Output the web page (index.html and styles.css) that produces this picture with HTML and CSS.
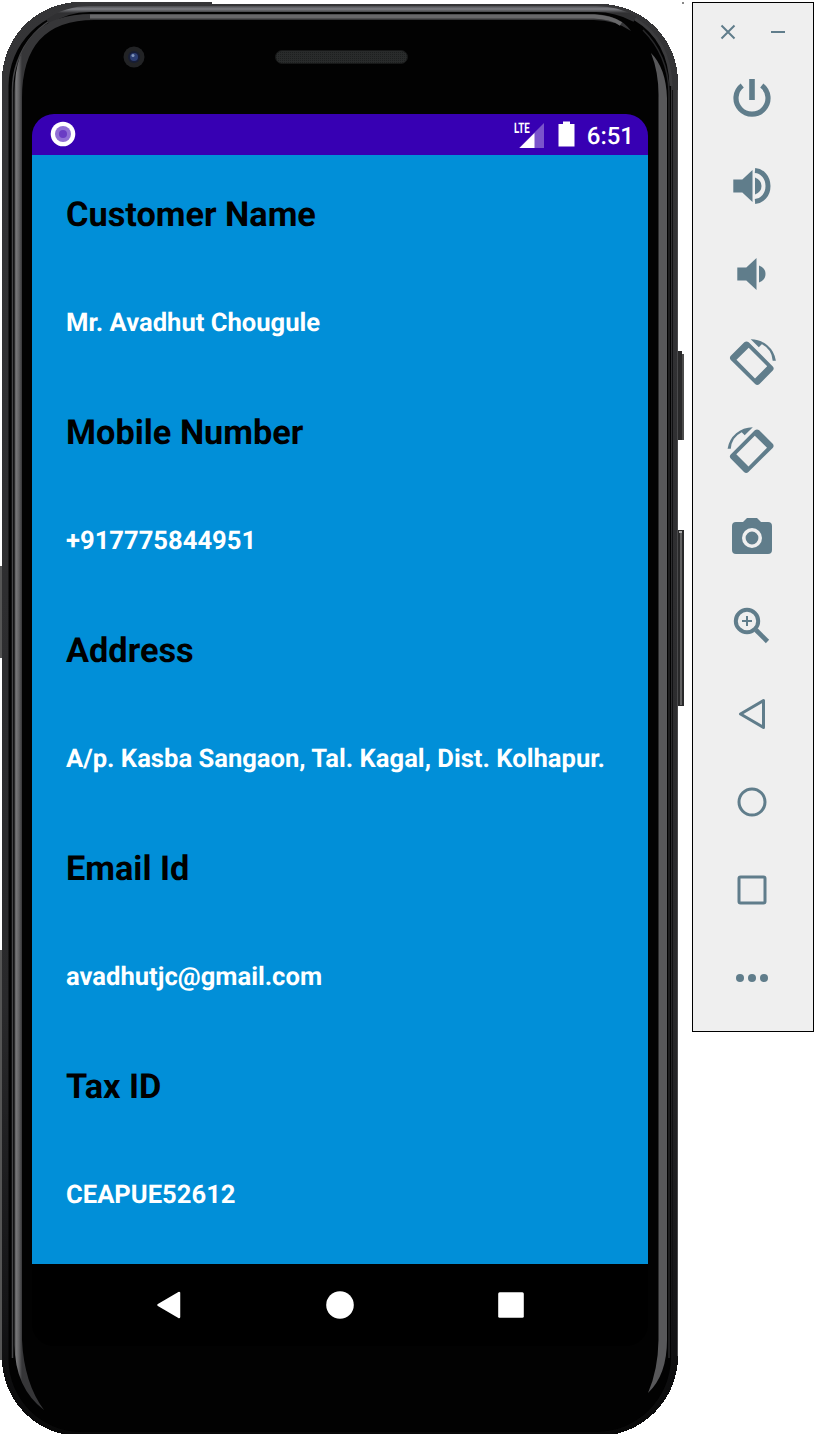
FILE: index.html
```html
<!DOCTYPE html>
<html lang="en">
<head>
<meta charset="utf-8">
<title>Customer details</title>
<link rel="stylesheet" href="styles.css">
</head>
<body>
<main class="workspace">
  <section class="device">
    <svg class="device-frame" width="692" height="1434" viewBox="0 0 692 1434" aria-hidden="true">
      <defs>
        <linearGradient id="rimL" x1="14" x2="22" y1="0" y2="0" gradientUnits="userSpaceOnUse">
          <stop offset="0" stop-color="#464648"/><stop offset=".3" stop-color="#757577"/><stop offset=".6" stop-color="#626264"/><stop offset="1" stop-color="#363638"/>
        </linearGradient>
        <linearGradient id="rimTop" x1="0" x2="0" y1="5" y2="13" gradientUnits="userSpaceOnUse">
          <stop offset="0" stop-color="#3a3a3c"/><stop offset=".5" stop-color="#7c7d82"/><stop offset="1" stop-color="#303032"/>
        </linearGradient>
        <linearGradient id="body" x1="0" x2="0" y1="0" y2="1434" gradientUnits="userSpaceOnUse">
          <stop offset="0" stop-color="#353537"/><stop offset=".7" stop-color="#29292b"/><stop offset=".92" stop-color="#141416"/><stop offset="1" stop-color="#080808"/>
        </linearGradient>
        <pattern id="mesh" width="2" height="2" patternUnits="userSpaceOnUse"><rect width="2" height="2" fill="#292b2b"/><rect width="1" height="1" fill="#1d1f1f"/></pattern>
      </defs>
      <path d="M0 566h3v92H0zM0 950h3v410H0z" fill="#555"/>
      <path d="M677 351h5v3h2v86h-7z" fill="#29292a"/>
      <path d="M683 354v86" stroke="#4b4b4b" stroke-width="2"/>
      <path d="M677 530h7v176h-7z" fill="#29292a"/>
      <path d="M681 533v172" stroke="#626262" stroke-width="2"/>
      <path d="M679 532h3" stroke="#aaa" stroke-width="2"/>
      <path d="M2 80A78 78 0 0 1 80 2H212V4H600A78 78 0 0 1 678 82V1356A80 80 0 0 1 598 1436H80A78 78 0 0 1 2 1358Z" fill="url(#body)" shape-rendering="crispEdges"/>
      <path d="M8.500 1360V86A76 77 0 0 1 85 9.500H598A73 75 0 0 1 671 85V1358A75 75 0 0 1 596 1432H82A73 73 0 0 1 8.500 1360Z" fill="#020202"/>
      <path d="M12.500 1358V92A75 80 0 0 1 88 10" fill="none" stroke="#454547" stroke-width="1.500"/>
      <path d="M48 22Q66 9 90 9H596Q616 9 635 19" fill="none" stroke="url(#rimTop)" stroke-width="6"/>
      <path d="M635 19Q670 40 671 86" fill="none" stroke="#3c3c3e" stroke-width="3"/>
      <path d="M669 1358V92Q668 55 643 30" fill="none" stroke="#28282a" stroke-width="1.500"/>
      <path d="M14.500 1345V92Q15 14 92 14H595Q621 16 631 31Q615 20 594 20H94Q22 20 22 98V1340Q24 1383 44 1410Q15 1388 14.500 1345Z" fill="url(#rimL)"/>
      <path d="M90 16.500H594Q611 17 621 24" fill="none" stroke="#68686a" stroke-width="4"/>
      <path d="M651 53Q666 68 667 98V1340Q667 1375 648 1393Q658 1370 658.500 1340V98Q659 73 651 53Z" fill="#58585a"/>
      <path d="M672.500 90V1360" stroke="#111113"/>
      <path d="M677.500 90V1356" stroke="#4a4a4c"/>
      <circle cx="134" cy="57" r="10.500" fill="#222325"/><circle cx="134" cy="57" r="6" fill="#171d34"/><circle cx="134" cy="57" r="4" fill="#2c3e73"/><circle cx="133" cy="55.500" r="1.500" fill="#8498bb"/>
      <rect x="275.500" y="50.500" width="132" height="13" rx="6.500" fill="url(#mesh)" stroke="#171818"/>
      <path d="M682 2h2v2h-2z" fill="#888"/>
    </svg>
    <div class="screen">
      <header class="status-bar">
        <svg class="status-app" width="26" height="26" viewBox="0 0 26 26"><circle cx="13" cy="13" r="12.300" fill="#fff"/><circle cx="13" cy="13" r="8" fill="#906fd5"/><circle cx="13" cy="13" r="4" fill="#6a3cc4"/></svg>
        <div class="signal">
          <svg width="32" height="27" viewBox="0 0 32 27"><path d="M31 2v25H6z" fill="#7a54cb"/><path d="M21.500 12v15H6.500z" fill="#fff"/></svg>
          <span class="network">LTE</span>
        </div>
        <svg class="battery" width="17" height="26" viewBox="0 0 17 26"><path d="M.5 3H5V.5h7V3h4.500v22.500H.500z" fill="#fff"/></svg>
        <time class="clock">6:51</time>
      </header>
      <dl class="details">
        <dt>Customer Name</dt><dd>Mr. Avadhut Chougule</dd>
        <dt>Mobile Number</dt><dd>+917775844951</dd>
        <dt>Address</dt><dd>A/p. Kasba Sangaon, Tal. Kagal, Dist. Kolhapur.</dd>
        <dt>Email Id</dt><dd>avadhutjc@gmail.com</dd>
        <dt>Tax ID</dt><dd>CEAPUE52612</dd>
      </dl>
      <nav class="nav-bar">
        <svg width="30" height="30" viewBox="0 0 30 30"><path d="M4.500 15 25 3v24z" fill="#fff" stroke="#fff" stroke-width="2.500" stroke-linejoin="round"/></svg>
        <svg width="30" height="30" viewBox="0 0 30 30"><circle cx="15" cy="15" r="13.800" fill="#fff"/></svg>
        <svg width="30" height="30" viewBox="0 0 30 30"><rect x="2.200" y="2.200" width="25.600" height="25.600" rx="1.500" fill="#fff"/></svg>
      </nav>
    </div>
  </section>
  <aside class="toolbar">
    <div class="window-controls">
      <svg width="16" height="16" viewBox="0 0 16 16"><path d="M1.500 1.500l13 13m0-13-13 13" class="line thin"/></svg>
      <svg width="16" height="16" viewBox="0 0 16 16"><path d="M1 8h14" class="line thin"/></svg>
    </div>
    <div class="tools">
      <svg viewBox="0 0 48 48"><path d="M24 5v21" class="line" stroke-width="5.600"/><path d="M14.200 11.500A16 16 0 1 0 33.800 11.500" class="line" stroke-width="5.200"/></svg>
      <svg viewBox="0 0 48 48"><path class="fill" d="M5.300 17.500h9L24.500 8v32l-10.200-9.500h-9zM27 15.500q6.500 2.500 6.500 8.500T27 32.500z"/><path d="M27 8.500C34 9 40 15 40 24S34 39 27 39.500" class="line" stroke-width="5"/></svg>
      <svg viewBox="0 0 48 48"><path class="fill" d="M9.300 17.500h9L28.500 8v32l-10.200-9.500h-9zM31 15.500q6.500 2.500 6.500 8.500T31 32.500z"/></svg>
      <svg viewBox="0 0 48 48"><g id="rotate" class="fill"><path fill-rule="evenodd" d="M2.800 17.800 16.300 4.300Q18.500 2.500 20.700 4.300L44.800 28.400Q46.600 30.500 44.800 32.600L31.500 46Q29.300 47.800 27.100 46L2.800 22Q1 19.900 2.800 17.800ZM20.700 9.700 8.500 21.800 27 40.400 39.200 28.200Z"/><path d="M22.700 1.300A25.300 25.300 0 0 1 47.900 22.800H44.700A20 20 0 0 0 33.800 6.200L30.800 9.200z"/></g></svg>
      <svg viewBox="0 0 48 48"><use href="#rotate" transform="matrix(-1 0 0 1 47.500 0)"/></svg>
      <svg viewBox="0 0 48 48"><path class="fill" d="M8 8h7l4-4h10l4 4h7q4 0 4 4v24q0 4-4 4H8q-4 0-4-4V12q0-4 4-4z"/><circle cx="24" cy="24" r="8.200" fill="none" stroke="#efefef" stroke-width="3.600"/></svg>
      <svg viewBox="0 0 48 48"><circle cx="19" cy="19" r="11.200" class="line" stroke-width="4"/><path d="M19 14v10m-5-5h10" class="line" stroke-width="2"/><path d="M28 28 39.500 39.500" class="line" stroke-width="4.600"/></svg>
      <svg viewBox="0 0 48 48"><path d="M12.500 24 35.500 10.500v27z" class="line" stroke-width="3" stroke-linejoin="round"/></svg>
      <svg viewBox="0 0 48 48"><circle cx="24" cy="24" r="13" class="line" stroke-width="3"/></svg>
      <svg viewBox="0 0 48 48"><rect x="11" y="11" width="26" height="26" rx="1.500" class="line" stroke-width="3"/></svg>
      <svg viewBox="0 0 48 48"><g class="fill"><circle cx="12" cy="24" r="4"/><circle cx="24" cy="24" r="4"/><circle cx="36" cy="24" r="4"/></g></svg>
    </div>
  </aside>
</main>
</body>
</html>
```

FILE: styles.css
```css
* { box-sizing: border-box; }
body { margin: 0; background: #fff; font-family: Roboto, "Liberation Sans", sans-serif; text-rendering: geometricPrecision; }
svg { display: block; flex: none; }
.workspace { display: flex; align-items: flex-start; width: 814px; height: 1434px; overflow: hidden; }
.device { position: relative; flex: 0 0 692px; height: 1434px; padding: 114px 44px 88px 32px; }
.device-frame { position: absolute; inset: 0; }
.screen { position: relative; display: flex; flex-direction: column; width: 616px; height: 1232px; overflow: hidden; border-radius: 22px; background: #000; }
.status-bar { display: flex; align-items: center; flex: 0 0 41px; height: 41px; padding: 0 14px 1px 18px; background: #3700b3; color: #fff; }
.status-app { margin-right: auto; }
.signal { position: relative; margin-right: 13px; }
.network { position: absolute; top: 1px; left: 1px; font-size: 14.5px; line-height: 14px; font-weight: 700; transform: scaleX(.67); transform-origin: left; }
.battery { margin-right: 12px; }
.clock { font-size: 24px; line-height: 30px; font-weight: 500; padding-top: 3px; }
.details { flex: 0 0 1109px; margin: 0; padding: 5px 34px; background: #018fd8; white-space: nowrap; }
.details dt, .details dd { margin: 0; height: 109px; line-height: 109px; font-weight: 700; }
.details dt { color: #000; font-size: 34.3px; line-height: 111px; }
.details dd { color: #fff; font-size: 25.6px; }
.nav-bar { display: flex; justify-content: space-between; align-items: center; height: 82px; padding: 0 122px; }
.toolbar { flex: 0 0 122px; height: 1030px; margin-top: 2px; border: 1px solid #000; background: #efefef; color: #607d8b; }
.window-controls { display: flex; gap: 34px; padding: 21px 0 0 27px; }
.tools { display: flex; flex-direction: column; align-items: center; gap: 40px; padding: 34px 2px 0 0; }
.tools svg { width: 48px; height: 48px; overflow: visible; }
.line { fill: none; stroke: #607d8b; }
.thin { stroke-width: 2; }
.fill { fill: #607d8b; }
```
